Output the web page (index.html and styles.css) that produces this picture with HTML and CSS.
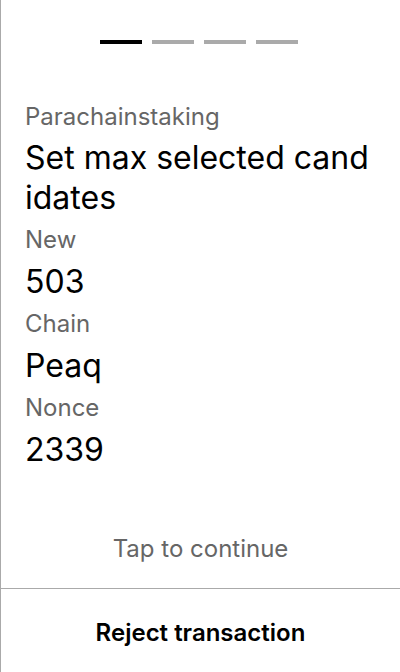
FILE: index.html
```html
<!DOCTYPE html>
<html>
<head>
<meta charset="utf-8">
<link rel="stylesheet" href="styles.css">
</head>
<body>
<div class="screen">
  <div class="progress">
    <span class="bar active"></span>
    <span class="bar"></span>
    <span class="bar"></span>
    <span class="bar"></span>
  </div>
  <div class="content">
    <div class="label category">Parachainstaking</div>
    <div class="title">Set max selected candidates</div>
    <div class="label">New</div>
    <div class="value">503</div>
    <div class="label">Chain</div>
    <div class="value">Peaq</div>
    <div class="label">Nonce</div>
    <div class="value">2339</div>
  </div>
  <div class="tap">Tap to continue</div>
  <div class="reject">Reject transaction</div>
</div>
</body>
</html>
```

FILE: styles.css
```css
html, body {
  margin: 0;
  padding: 0;
  background: #fff;
}
body {
  font-family: Inter, "Noto Sans", sans-serif;
  color: #000;
}
.screen {
  height: 672px;
  box-sizing: border-box;
  border-left: 1px solid #aaaaaa;
  display: flex;
  flex-direction: column;
}
.progress {
  display: flex;
  justify-content: center;
  gap: 10px;
  padding: 40px 3px 0 0;
}
.bar {
  width: 42px;
  height: 4px;
  background: #aaaaaa;
}
.bar.active {
  background: #000;
}
.content {
  padding: 58px 24px 0 24px;
  flex: 1;
}
.label {
  font-size: 24px;
  line-height: 29px;
  color: #666666;
  margin-bottom: 8px;
}
.label.category {
  margin-bottom: 7px;
}
.title {
  font-size: 32px;
  line-height: 40px;
  word-break: break-all;
  margin-bottom: 7px;
}
.value {
  font-size: 32px;
  line-height: 39px;
  margin-bottom: 8px;
}
.tap {
  text-align: center;
  font-size: 24px;
  line-height: 29px;
  color: #666666;
  padding-bottom: 25px;
}
.reject {
  border-top: 1px solid #aaaaaa;
  height: 84px;
  box-sizing: border-box;
  padding-top: 4px;
  display: flex;
  align-items: center;
  justify-content: center;
  font-size: 24px;
  line-height: 29px;
  font-weight: 600;
}
```
